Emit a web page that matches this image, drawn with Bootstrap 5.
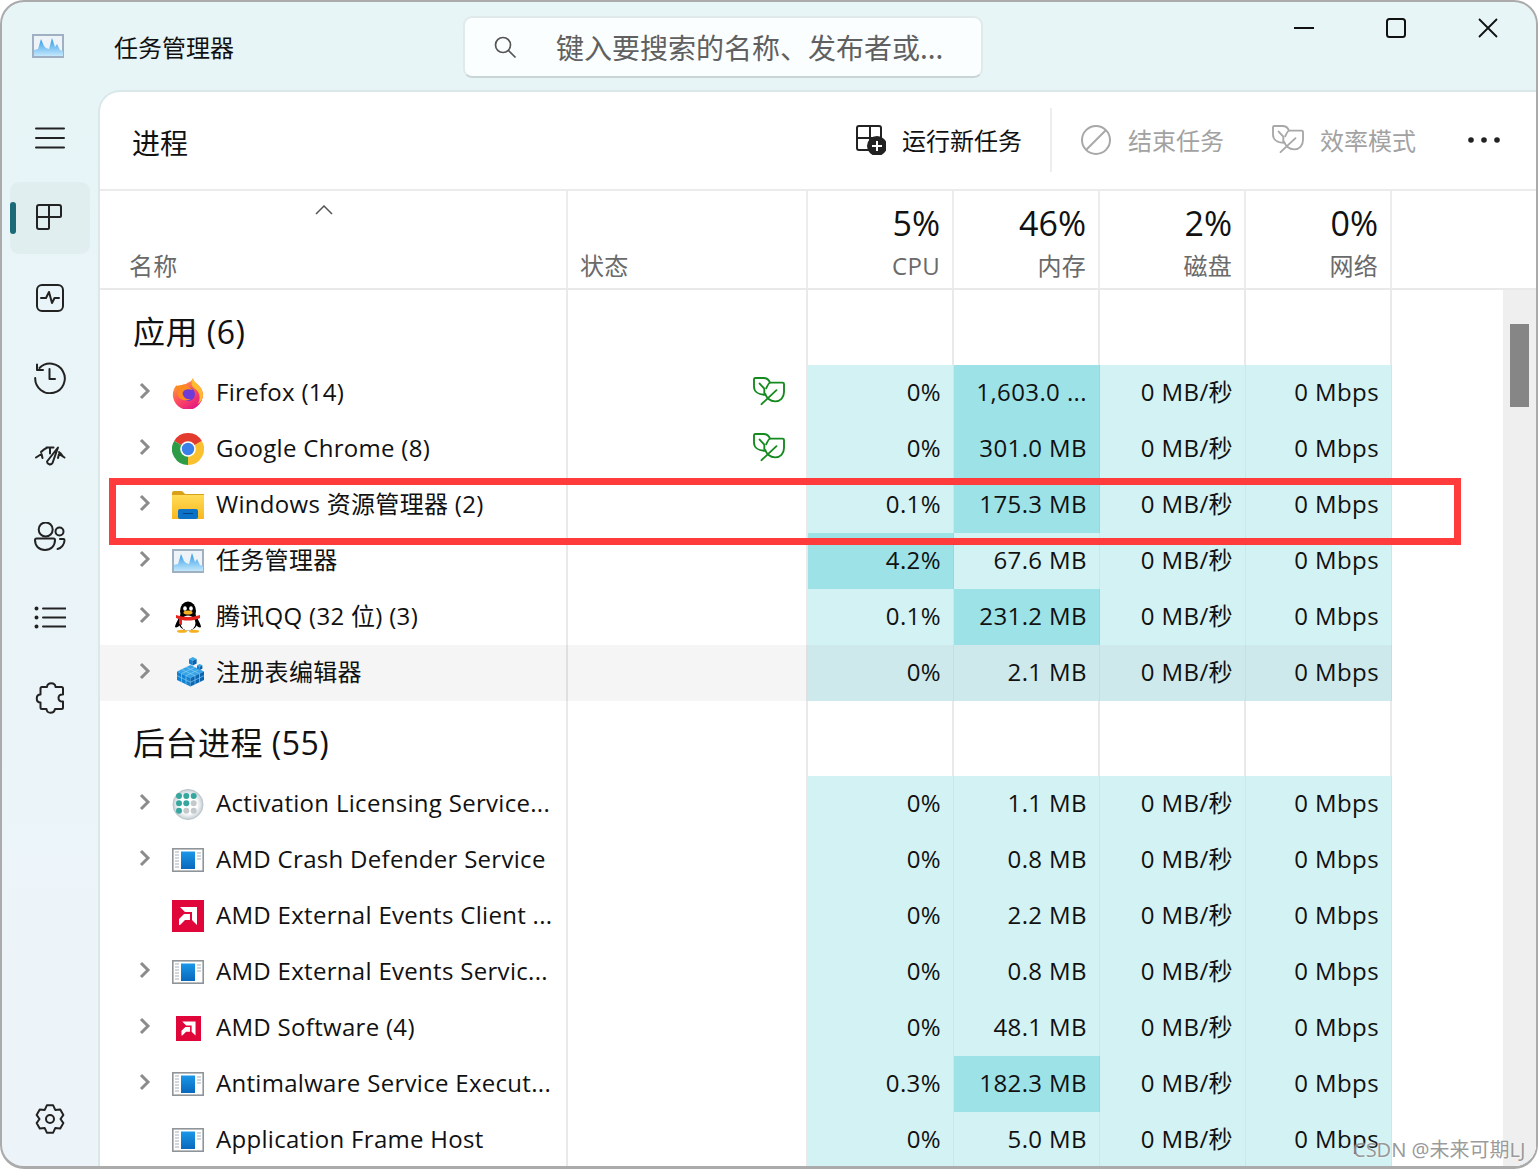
<!DOCTYPE html>
<html lang="zh-CN">
<head>
    <meta charset="UTF-8">
    <meta name="viewport" content="width=device-width, initial-scale=1.0">
    <title>任务管理器</title>
    <link href="https://cdn.jsdelivr.net/npm/bootstrap@5.3.0/dist/css/bootstrap.min.css" rel="stylesheet">
    <style>
        html, body { height: 1169px; overflow: hidden; background: #fff; }
        body { font-family: "Open Sans", "Noto Sans CJK SC", sans-serif; color: #111; }
        .app-shell { height: 1169px; border: 2px solid #ababab; border-bottom-width: 3px; border-radius: 24px; overflow: hidden; background: linear-gradient(#e7f5f7, #edf4f9); }
        .title-strip { height: 88px; }
        .title-left { padding-left: 30px; }
        .app-name { font-size: 24px; margin-left: 50px; width: 349px; padding-top: 2px; font-family: "Noto Sans CJK SC", sans-serif; }
        .search-box { width: 520px; height: 62px; margin-top: 14px; background: #fafefe; border: 2px solid #e0eaeb; border-bottom-color: #c9d4d6; border-radius: 9px; padding-left: 28px; }
        .search-text { font-size: 28px; color: #606060; margin-left: 39px; white-space: nowrap; font-family: "Noto Sans CJK SC", sans-serif; }
        .win-group { margin-right: 2px; }
        .win-btn { width: 92px; height: 52px; }
        .side-rail { width: 96px; padding: 12px 6px 11px 8px; }
        .rail-btn { width: 80px; height: 72px; margin-bottom: 8px; border-radius: 9px; }
        .rail-btn.is-on { background: #e1eef0; }
        .rail-btn.is-on::before { content: ""; position: absolute; left: 0; top: 20px; width: 6px; height: 32px; border-radius: 3px; background: #1a6a78; }
        .rail-ico { width: 32px; height: 32px; fill: none; stroke: #222; stroke-width: 2; stroke-linecap: round; stroke-linejoin: round; }
        .main-panel { background: #fff; border-top: 2px solid #dbe8ea; border-left: 2px solid #dbe8ea; border-top-left-radius: 22px; min-width: 0; }
        .cmd-bar { height: 99px; border-bottom: 2px solid #ebebeb; padding: 0 36px 2px 32px; flex-shrink: 0; }
        .cmd-title { font-size: 28px; font-family: "Noto Sans CJK SC", sans-serif; padding-top: 4px; }
        .cmd-item { font-size: 24px; white-space: nowrap; font-family: "Noto Sans CJK SC", sans-serif; }
        .cmd-item.is-off { color: #a2a2a2; }
        .cmd-eff { margin-left: 48px; }
        .cmd-more { margin-left: 52px; }
        .cmd-split { width: 2px; height: 64px; background: #ededed; margin: 0 28px; }
        .proc-grid { display: grid; grid-template-columns: 468px 240px 146px 146px 146px 146px; }
        .proc-head { height: 99px; border-bottom: 2px solid #e9e9e9; flex-shrink: 0; }
        .head-cell { position: relative; border-right: 2px solid #ececec; padding: 0 12px; height: 97px; }
        .head-pct { font-size: 34px; line-height: 44px; margin-top: 10px; color: #111; }
        .head-lbl { font-size: 24px; line-height: 36px; margin-top: 3px; color: #6a6a6a; letter-spacing: .3px; }
        .name-lbl { margin-left: 17px; }
        .sort-mark { position: absolute; left: 215px; top: 14px; width: 18px; height: 10px; }
        .proc-scroll { width: 33px; background: #efefef; }
        .proc-thumb { width: 19px; height: 83px; margin: 34px 0 0 7px; background: #868686; }
        .group-row { height: 75px; }
        .group-name { font-size: 32px; letter-spacing: .5px; white-space: nowrap; padding: 19px 0 0 33px; line-height: 46px; }
        .data-row { height: 56px; }
        .col-line { border-right: 2px solid rgba(0, 0, 0, .085); }
        .name-cell { padding-left: 36px; font-size: 24px; letter-spacing: .3px; white-space: nowrap; }
        .name-text { padding-bottom: 2px; }
        .chev-box { width: 18px; height: 18px; margin: 0 18px 4px 0; flex-shrink: 0; }
        .app-ico { width: 32px; height: 32px; margin-right: 12px; flex-shrink: 0; }
        .leaf-ico { width: 32px; height: 30px; margin: 0 21px 2px 0; color: #158a1e; }
        .val-cell { font-size: 24px; letter-spacing: .4px; padding: 0 12px 2px 0; white-space: nowrap; border-right: 1px solid rgba(0, 0, 0, .04); }
        .heat-low { background: #d3f2f4; }
        .heat-high { background: #9de2e7; }
        .data-row.is-hover .plain-cell { background: #f5f5f5; }
        .data-row.is-hover .heat-low { background: #cde9ec; }
        .red-frame { position: absolute; left: 109px; top: 478px; width: 1352px; height: 67px; border: 7px solid #ff3b3b; pointer-events: none; }
        .mark-text { position: absolute; left: 1351px; top: 1134px; font-size: 20px; line-height: 28px; color: rgba(110, 110, 110, .7); text-shadow: 0 0 2px #fff; white-space: nowrap; font-family: "Noto Sans", "Noto Sans CJK SC", sans-serif; }
    </style>
</head>
<body class="m-0">
    <svg width="0" height="0" class="position-absolute">
        <defs>
            <linearGradient id="ffBody" x1="0.1" y1="0" x2="0.7" y2="1"><stop offset="0" stop-color="#ffb52e"/><stop offset=".55" stop-color="#ff4f5e"/><stop offset="1" stop-color="#e31587"/></linearGradient>
            <linearGradient id="tmGraph" x1="0" y1="0" x2="0" y2="1"><stop offset="0" stop-color="#2b98ea"/><stop offset="1" stop-color="#c4e8fb"/></linearGradient>
            <linearGradient id="folderFace" x1="0" y1="0" x2="0" y2="1"><stop offset="0" stop-color="#ffdc57"/><stop offset="1" stop-color="#f8b71e"/></linearGradient>
            <linearGradient id="appBlue" x1="0" y1="0" x2="0" y2="1"><stop offset="0" stop-color="#1a97e8"/><stop offset="1" stop-color="#0a68bc"/></linearGradient>
            <radialGradient id="discFace"><stop offset=".6" stop-color="#fff"/><stop offset="1" stop-color="#c4ced4"/></radialGradient>
            <g id="regCube">
                <path d="M4.500 0 9 2.250 4.500 4.500 0 2.250z" fill="#3aa9e8"/>
                <path d="M0 2.250 4.500 4.500V10L0 7.750z" fill="#1180cf"/>
                <path d="M9 2.250 4.500 4.500V10L9 7.750z" fill="#0a63ad"/>
            </g>
        </defs>
        <symbol id="i-taskmgr" viewBox="0 0 32 32">
            <rect x="1" y="5" width="30" height="22" fill="#eef3f8" stroke="#9fb0c2" stroke-width="2"/>
            <path d="M2 26v-6l4-1 3-10 3 7 2 2 3 1 3-11 3 9 2-3 3 6 3 1v5z" fill="url(#tmGraph)"/>
        </symbol>
        <symbol id="i-firefox" viewBox="0 0 32 32">
            <path d="M21 1c0 4 4 5 7 9 3 4 3.500 8 2.500 11A15 15 0 1 1 2 12c1-2 2-3 3-4 0 2 .5 3 1 3 2-3 5-4 8-4 2-2 6-2 7-6z" fill="url(#ffBody)"/>
            <path d="M21 1c0 4 4 5 7 9 3 4 3.500 8 2.500 11-1 3-3 5-5 6 3-4 3-10-1-14-2-2-5-3-5-7 0-2 1-4 1.500-5z" fill="#ffbd2e"/>
            <circle cx="16" cy="17" r="7" fill="#6e3bd6"/>
            <path d="M3 10c3-2 8-3 12-1 3 1 5 3 6 4-3-1-6-1-8 0-2 1-3 3-2 5 1 3 4 5 8 4-5 3-11 1-13-3-1-3 0-5 1-6-2 0-4-1-4-3z" fill="#ff8a1f"/>
        </symbol>
        <symbol id="i-chrome" viewBox="0 0 32 32">
            <path d="M16 16 2.140 8A16 16 0 0 1 29.860 8z" fill="#e33b2e"/>
            <path d="M16 16 29.860 8A16 16 0 0 1 16 32z" fill="#fbc02d"/>
            <path d="M16 16 16 32A16 16 0 0 1 2.140 8z" fill="#2e9b47"/>
            <circle cx="16" cy="16" r="7.800" fill="#fff"/>
            <circle cx="16" cy="16" r="6.200" fill="#3b7fe8"/>
        </symbol>
        <symbol id="i-folder" viewBox="0 0 32 32">
            <path d="M0 4a2 2 0 0 1 2-2h7c2 0 2 1 4 3h19v6H0z" fill="#d9a11a"/>
            <rect x="0" y="6" width="32" height="24" fill="url(#folderFace)"/>
            <rect x="6" y="20" width="20" height="10" rx="2" fill="#0c72c8"/>
            <path d="M11 24.500h10" stroke="#04457e" stroke-width="1"/>
        </symbol>
        <symbol id="i-qq" viewBox="0 0 32 32">
            <ellipse cx="16" cy="10" rx="8" ry="9.500"/>
            <ellipse cx="16" cy="20" rx="10" ry="9.500"/>
            <path d="M7 17c-2 3-4 7-4 9 1 1 3 0 4-1zM25 17c2 3 4 7 4 9-1 1-3 0-4-1z"/>
            <ellipse cx="16" cy="22" rx="7.500" ry="7.500" fill="#fff"/>
            <ellipse cx="13" cy="7.500" rx="1.800" ry="2.300" fill="#fff"/>
            <ellipse cx="19" cy="7.500" rx="1.800" ry="2.300" fill="#fff"/>
            <ellipse cx="16" cy="11.500" rx="4.500" ry="2" fill="#f5b01e"/>
            <path d="M4 14c7 2.500 17 2.500 24 0v3c-2 1-4 1.500-6 2-4 .8-8 .8-12 0v5l-3-1v-5c-1-.5-2-.6-3-1z" fill="#e6231d"/>
            <ellipse cx="10" cy="30.300" rx="5" ry="1.500" fill="#f5b01e"/>
            <ellipse cx="22" cy="30.300" rx="5" ry="1.500" fill="#f5b01e"/>
        </symbol>
        <symbol id="i-regedit" viewBox="0 0 32 32">
            <path d="M18.500 8 32 14.500 18.500 21 5 14.500z" fill="#35a3e6"/>
            <path d="M5 14.500 18.500 21v8.500L5 23z" fill="#1282d2"/>
            <path d="M32 14.500 18.500 21v8.500L32 23z" fill="#0a66b2"/>
            <path d="M9.500 12.300 23 18.800M14 10.200l13.500 6.500M23 10.200 9.500 16.700M27.500 12.300 14 18.800M9.500 16.700v8.500M14 18.800v8.500M5 18.700l13.500 6.500M23 18.800v8.500M27.500 16.700v8.500M18.500 25.200 32 18.700" stroke="#86cdf3" stroke-width=".7" fill="none"/>
            <use href="#regCube" transform="translate(17 0) scale(.85)"/>
            <use href="#regCube" transform="translate(25 7) scale(.6)"/>
        </symbol>
        <symbol id="i-disc" viewBox="0 0 32 32">
            <circle cx="16" cy="16.500" r="15" fill="url(#discFace)" stroke="#b9c3ca"/>
            <g fill="#35a79f">
                <circle cx="7" cy="8" r="3"/><circle cx="14.300" cy="8" r="3"/><circle cx="21.700" cy="8" r="3"/>
                <circle cx="7" cy="15.300" r="3"/><circle cx="14.300" cy="15.300" r="3"/>
                <circle cx="7" cy="22.700" r="3"/>
            </g>
            <g fill="#c4c9cc">
                <circle cx="21.700" cy="15.300" r="3"/><circle cx="14.300" cy="22.700" r="3"/><circle cx="21.700" cy="22.700" r="3"/>
            </g>
        </symbol>
        <symbol id="i-winapp" viewBox="0 0 32 32">
            <rect x=".8" y="4.800" width="30.400" height="22.400" fill="#fff" stroke="#8f9499" stroke-width="1.600"/>
            <rect x="9" y="7.500" width="14" height="17.500" fill="url(#appBlue)"/>
            <path d="M3 8h4M3 11h4M3 14h4M3 17h4M3 20h4M3 23h4M25 9h4M25 12h4M25 15h4" stroke="#a9aeb3" stroke-width="1"/>
        </symbol>
        <symbol id="i-amd" viewBox="0 0 32 32">
            <rect width="32" height="32" fill="#e0063a"/>
            <path d="M8 7h17v18l-5-5V12h-7z" fill="#fff"/>
            <path d="M7 19l5-5h6v6h-5l-5 5H7z" fill="#fff"/>
        </symbol>
        <symbol id="i-leaf" viewBox="0 0 34 32" fill="none" stroke="currentColor" stroke-width="2" stroke-linejoin="round" stroke-linecap="round">
            <path d="M14 12c2-4 3-6 4-6h13.500c1 0 1.500 .5 1.500 1.500V16c0 6-4 10-9.500 10S14 22 13 18"/>
            <path d="M18 6c-1-3-3-5-7-5H2.500C1.500 1 1 1.500 1 2.500V10c0 5 4 9 12 9"/>
            <path d="M9 29 25 14M7 7l5 5.500V18"/>
        </symbol>
        <symbol id="i-chev" viewBox="0 0 18 18"><path d="M5 2l7 7-7 7" fill="none" stroke="#8c8c8c" stroke-width="3"/></symbol>
    </svg>

    <div class="app-shell d-flex flex-column position-relative">
        <div class="title-strip d-flex align-items-start flex-shrink-0">
            <div class="title-left d-flex align-items-center h-100">
                <svg width="32" height="32"><use href="#i-taskmgr"/></svg>
                <div class="app-name">任务管理器</div>
            </div>
            <div class="search-box d-flex align-items-center flex-shrink-0">
                <svg width="24" height="24" viewBox="0 0 24 24" fill="none" stroke="#555" stroke-width="1.700"><circle cx="10" cy="10" r="7.500"/><path d="M15.500 15.500l7 7"/></svg>
                <div class="search-text">键入要搜索的名称、发布者或...</div>
            </div>
            <div class="win-group ms-auto d-flex">
                <div class="win-btn d-flex align-items-center justify-content-center"><svg width="22" height="22" viewBox="0 0 22 22"><path d="M1 11h20" stroke="#111" stroke-width="2"/></svg></div>
                <div class="win-btn d-flex align-items-center justify-content-center"><svg width="22" height="22" viewBox="0 0 22 22"><rect x="2" y="2" width="18" height="18" rx="2.500" fill="none" stroke="#111" stroke-width="2"/></svg></div>
                <div class="win-btn d-flex align-items-center justify-content-center"><svg width="22" height="22" viewBox="0 0 22 22"><path d="M2 2l18 18M20 2 2 20" stroke="#111" stroke-width="1.800"/></svg></div>
            </div>
        </div>

        <div class="d-flex flex-grow-1 overflow-hidden">
            <nav class="side-rail d-flex flex-column flex-shrink-0">
                <div class="rail-btn d-flex align-items-center justify-content-center position-relative">
                    <svg class="rail-ico" viewBox="0 0 32 32"><path d="M2 6.500h28M2 16h28M2 25.500h28"/></svg>
                </div>
                <div class="rail-btn is-on d-flex align-items-center justify-content-center position-relative">
                    <svg class="rail-ico" viewBox="0 0 32 32"><path d="M5 3h20a2 2 0 0 1 2 2v9a1 1 0 0 1-1 1H15v11a1 1 0 0 1-1 1H5a2 2 0 0 1-2-2V5a2 2 0 0 1 2-2zM15 3v12H3"/></svg>
                </div>
                <div class="rail-btn d-flex align-items-center justify-content-center position-relative">
                    <svg class="rail-ico" viewBox="0 0 32 32"><rect x="3" y="3" width="26" height="26" rx="5"/><path d="M7 16h5l3-6 3 11 2.500-5H25"/></svg>
                </div>
                <div class="rail-btn d-flex align-items-center justify-content-center position-relative">
                    <svg class="rail-ico" viewBox="0 0 32 32"><path d="M5.500 6A14.800 14.800 0 1 1 1.200 16M3 2.500V8h6M15.500 7v10H21"/></svg>
                </div>
                <div class="rail-btn d-flex align-items-center justify-content-center position-relative">
                    <svg class="rail-ico" viewBox="0 0 32 32"><path d="M7 10c2-2 4-3.500 6-4.200M25 10c1.500 1 3 3 4 4.500M2 15.500 7.500 12l1 4M30.500 15.500 25 12l-1 4M12.500 5.500h7M16 5.500v6M24 5.500 18.500 21a3 3 0 0 1-5.500-1.500z"/></svg>
                </div>
                <div class="rail-btn d-flex align-items-center justify-content-center position-relative">
                    <svg class="rail-ico" viewBox="0 0 32 32"><circle cx="11.700" cy="7.500" r="7"/><circle cx="25.500" cy="9.500" r="4"/><path d="M2.500 16.500h17a1.500 1.500 0 0 1 1.500 1.500c0 6-4 10-10 10S1 24 1 18a1.500 1.500 0 0 1 1.500-1.500zM26 17h3.500c.8 0 1 .5 1 1.200 0 4-3 8-7 8.800"/></svg>
                </div>
                <div class="rail-btn d-flex align-items-center justify-content-center position-relative">
                    <svg class="rail-ico" viewBox="0 0 32 32"><path d="M9 6.500h22.500M9 15.500h22.500M9 24.500h22.500"/><circle cx="2.500" cy="6.500" r="1" /><circle cx="2.500" cy="15.500" r="1"/><circle cx="2.500" cy="24.500" r="1"/></svg>
                </div>
                <div class="rail-btn d-flex align-items-center justify-content-center position-relative">
                    <svg class="rail-ico" viewBox="0 0 32 32"><path d="M8 5h5c.5-5 8-5 8.500 0h6a1.500 1.500 0 0 1 1.500 1.500v6c-6-1-6 8 0 7v6a1.500 1.500 0 0 1-1.500 1.500H21c-1 5-8 5-8.500 0H8a1.500 1.500 0 0 1-1.500-1.500v-5c-5 0-5-8 0-8v-6A1.500 1.500 0 0 1 8 5z"/></svg>
                </div>
                <div class="rail-btn d-flex align-items-center justify-content-center position-relative mt-auto mb-0">
                    <svg class="rail-ico" viewBox="0 0 32 32"><path d="M12.850 2.360h6.300l2.100 4.550 4.990-.46 3.150 5.460-2.890 4.090 2.890 4.090-3.150 5.460-4.990-.46-2.100 4.550h-6.300l-2.100-4.550-4.990.46-3.150-5.460 2.890-4.090-2.890-4.090 3.150-5.460 4.990.46z"/><circle cx="16" cy="16" r="4"/></svg>
                </div>
            </nav>

            <main class="main-panel flex-grow-1 d-flex flex-column overflow-hidden">
                <div class="cmd-bar d-flex align-items-center">
                    <div class="cmd-title me-auto">进程</div>
                    <div class="cmd-item d-flex align-items-center gap-3">
                        <svg width="30" height="30" viewBox="0 0 30 30" fill="none" stroke="#222" stroke-width="2" stroke-linejoin="round"><path d="M3 1h20a2 2 0 0 1 2 2v10M14 1v24H3a2 2 0 0 1-2-2V3a2 2 0 0 1 2-2zM1 13h24"/><circle cx="21" cy="21" r="9" fill="#222"/><path d="M21 16v10M16 21h10" stroke="#fff"/></svg>
                        <span>运行新任务</span>
                    </div>
                    <div class="cmd-split"></div>
                    <div class="cmd-item is-off d-flex align-items-center gap-3">
                        <svg width="32" height="32" viewBox="0 0 32 32" fill="none" stroke="#a8a8a8" stroke-width="2"><circle cx="16" cy="16" r="14"/><path d="M26 6 6 26"/></svg>
                        <span>结束任务</span>
                    </div>
                    <div class="cmd-item cmd-eff is-off d-flex align-items-center gap-3">
                        <svg width="32" height="30"><use href="#i-leaf" color="#a8a8a8"/></svg>
                        <span>效率模式</span>
                    </div>
                    <svg class="cmd-more" width="32" height="8" viewBox="0 0 32 8" fill="#222"><circle cx="3" cy="4" r="2.800"/><circle cx="16" cy="4" r="2.800"/><circle cx="29" cy="4" r="2.800"/></svg>
                </div>

                <div class="proc-grid proc-head">
                    <div class="head-cell d-flex flex-column justify-content-end pb-1">
                        <svg class="sort-mark" viewBox="0 0 18 10" fill="none" stroke="#555" stroke-width="1.500"><path d="M1 9l8-8 8 8"/></svg>
                        <div class="head-lbl name-lbl">名称</div>
                    </div>
                    <div class="head-cell d-flex flex-column justify-content-end pb-1"><div class="head-lbl">状态</div></div>
                    <div class="head-cell text-end"><div class="head-pct">5%</div><div class="head-lbl">CPU</div></div>
                    <div class="head-cell text-end"><div class="head-pct">46%</div><div class="head-lbl">内存</div></div>
                    <div class="head-cell text-end"><div class="head-pct">2%</div><div class="head-lbl">磁盘</div></div>
                    <div class="head-cell text-end"><div class="head-pct">0%</div><div class="head-lbl">网络</div></div>
                </div>

                <div class="d-flex flex-grow-1 overflow-hidden">
                    <div class="flex-grow-1 overflow-hidden" id="procList"></div>
                    <div class="proc-scroll flex-shrink-0"><div class="proc-thumb"></div></div>
                </div>
            </main>
        </div>

        <div class="mark-text">CSDN @未来可期LJ</div>
    </div>
    <div class="red-frame"></div>

    <script src="https://cdn.jsdelivr.net/npm/bootstrap@5.3.0/dist/js/bootstrap.bundle.min.js"></script>
    <script>
        // name, icon, expandable, eco leaf, cpu, mem, which of cpu/mem is highlighted
        const apps = [
            ['Firefox (14)', 'firefox', 1, 1, '0%', '1,603.0 ...', 'mem'],
            ['Google Chrome (8)', 'chrome', 1, 1, '0%', '301.0 MB', 'mem'],
            ['Windows 资源管理器 (2)', 'folder', 1, 0, '0.1%', '175.3 MB', 'mem'],
            ['任务管理器', 'taskmgr', 1, 0, '4.2%', '67.6 MB', 'cpu'],
            ['腾讯QQ (32 位) (3)', 'qq', 1, 0, '0.1%', '231.2 MB', 'mem'],
            ['注册表编辑器', 'regedit', 1, 0, '0%', '2.1 MB', '', 'is-hover']
        ];
        const background = [
            ['Activation Licensing Service...', 'disc', 1, 0, '0%', '1.1 MB', ''],
            ['AMD Crash Defender Service', 'winapp', 1, 0, '0%', '0.8 MB', ''],
            ['AMD External Events Client ...', 'amd', 0, 0, '0%', '2.2 MB', ''],
            ['AMD External Events Servic...', 'winapp', 1, 0, '0%', '0.8 MB', ''],
            ['AMD Software (4)', 'amd-small', 1, 0, '0%', '48.1 MB', ''],
            ['Antimalware Service Execut...', 'winapp', 1, 0, '0.3%', '182.3 MB', 'mem'],
            ['Application Frame Host', 'winapp', 0, 0, '0%', '5.0 MB', '']
        ];

        function groupRow(title) {
            return `<div class="proc-grid group-row">
                <div class="col-line group-name">${title}</div>
                <div class="col-line"></div><div class="col-line"></div><div class="col-line"></div><div class="col-line"></div><div class="col-line"></div>
            </div>`;
        }

        function valCell(text, heat) {
            return `<div class="val-cell ${heat} d-flex align-items-center justify-content-end">${text}</div>`;
        }

        function dataRow([name, icon, expand, eco, cpu, mem, high, extra]) {
            const chev = expand ? '<svg class="chev-box"><use href="#i-chev"/></svg>' : '<span class="chev-box"></span>';
            const ico = icon === 'amd-small'
                ? '<span class="app-ico d-flex align-items-center justify-content-center"><svg width="25" height="25"><use href="#i-amd"/></svg></span>'
                : `<svg class="app-ico"><use href="#i-${icon}"/></svg>`;
            const leaf = eco ? '<svg class="leaf-ico"><use href="#i-leaf"/></svg>' : '';
            return `<div class="proc-grid data-row ${extra || ''}">
                <div class="col-line plain-cell name-cell d-flex align-items-center">${chev}${ico}<span class="name-text">${name}</span></div>
                <div class="col-line plain-cell d-flex align-items-center justify-content-end">${leaf}</div>
                ${valCell(cpu, high === 'cpu' ? 'heat-high' : 'heat-low')}
                ${valCell(mem, high === 'mem' ? 'heat-high' : 'heat-low')}
                ${valCell('0 MB/秒', 'heat-low')}
                ${valCell('0 Mbps', 'heat-low')}
            </div>`;
        }

        document.getElementById('procList').innerHTML =
            groupRow('应用 (6)') + apps.map(dataRow).join('') +
            groupRow('后台进程 (55)') + background.map(dataRow).join('');
    </script>
</body>
</html>
